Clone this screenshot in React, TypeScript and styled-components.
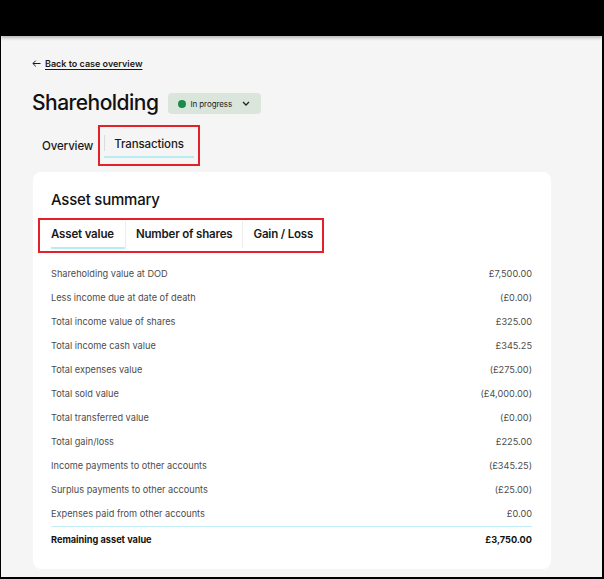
import styled, { createGlobalStyle } from 'styled-components'

const GlobalStyle = createGlobalStyle`
  html, body {
    margin: 0;
    padding: 0;
    background: #ffffff;
  }
  body {
    font-family: Inter, "Liberation Sans", Arial, sans-serif;
    color: #1a1a1a;
  }
  * {
    box-sizing: border-box;
  }
`

type SummaryRow = {
  label: string
  value: string
}

const rows: SummaryRow[] = [
  { label: 'Shareholding value at DOD', value: '£7,500.00' },
  { label: 'Less income due at date of death', value: '(£0.00)' },
  { label: 'Total income value of shares', value: '£325.00' },
  { label: 'Total income cash value', value: '£345.25' },
  { label: 'Total expenses value', value: '(£275.00)' },
  { label: 'Total sold value', value: '(£4,000.00)' },
  { label: 'Total transferred value', value: '(£0.00)' },
  { label: 'Total gain/loss', value: '£225.00' },
  { label: 'Income payments to other accounts', value: '(£345.25)' },
  { label: 'Surplus payments to other accounts', value: '(£25.00)' },
  { label: 'Expenses paid from other accounts', value: '£0.00' },
]

const assetTabs = ['Asset value', 'Number of shares', 'Gain / Loss']

export default function App() {
  return (
    <>
      <GlobalStyle />
      <Frame>
        <TopBar />
        <Main>
          <BackLink href="#">
            <svg width="9" height="7" viewBox="0 0 9 7" fill="none">
              <path d="M8.5 3.5H1M3.8 0.6L0.9 3.5l2.9 2.9" stroke="#1a1a1a" strokeWidth="1" />
            </svg>
            <span>Back to case overview</span>
          </BackLink>

          <TitleRow>
            <Title>Shareholding</Title>
            <StatusBadge>
              <Dot />
              <span>In progress</span>
              <svg width="8" height="5" viewBox="0 0 8 5" fill="none">
                <path d="M1 1l3 3 3-3" stroke="#222" strokeWidth="1.3" />
              </svg>
            </StatusBadge>
          </TitleRow>

          <PageTabs>
            <PageTab>Overview</PageTab>
            <Highlight $pad="4px 4px 6px 4px">
              <PageTab $active $divider>Transactions</PageTab>
            </Highlight>
          </PageTabs>

          <Card>
            <CardTitle>Asset summary</CardTitle>
            <SubTabsWrap>
              <Highlight $pad="1px 0 2px 11px">
                <SubTabs>
                  {assetTabs.map((t, i) => (
                    <SubTab
                      key={t}
                      $active={i === 0}
                      $first={i === 0}
                      $last={i === assetTabs.length - 1}
                    >
                      {t}
                    </SubTab>
                  ))}
                </SubTabs>
              </Highlight>
            </SubTabsWrap>

            <Rows>
              {rows.map((r) => (
                <Row key={r.label}>
                  <span>{r.label}</span>
                  <span>{r.value}</span>
                </Row>
              ))}
            </Rows>
            <TotalRow>
              <span>Remaining asset value</span>
              <span>£3,750.00</span>
            </TotalRow>
          </Card>
        </Main>
      </Frame>
    </>
  )
}

const Frame = styled.div`
  width: 604px;
  height: 579px;
  border: 1px solid #000;
  border-top: none;
  border-right-width: 2px;
  border-bottom-width: 2px;
  background: #f5f5f5;
  display: flex;
  flex-direction: column;
  overflow: hidden;
`

const TopBar = styled.div`
  height: 36px;
  flex-shrink: 0;
  background: #000;
  box-shadow: 0 2px 3px rgba(0, 0, 0, 0.25);
  position: relative;
  z-index: 1;
`

const Main = styled.main`
  flex: 1;
  padding: 21px 51px 0 31px;
  display: flex;
  flex-direction: column;
  align-items: flex-start;
`

const BackLink = styled.a`
  display: flex;
  align-items: center;
  gap: 4px;
  height: 12px;
  color: #1a1a1a;
  text-decoration: none;
  font-size: 9px;
  font-weight: 600;

  span {
    text-decoration: underline;
    text-underline-offset: 2px;
    text-decoration-thickness: 1px;
  }
`

const TitleRow = styled.div`
  display: flex;
  align-items: center;
  gap: 10px;
  margin-top: 21px;
  height: 26px;
`

const Title = styled.h1`
  margin: 0;
  font-size: 21px;
  font-weight: 500;
  letter-spacing: -0.025em;
  color: #111;
  line-height: 26px;
`

const StatusBadge = styled.button`
  display: flex;
  align-items: center;
  gap: 4px;
  height: 21px;
  width: 93px;
  padding: 0 0 0 10px;
  border: none;
  border-radius: 4px;
  background: #dae6dc;
  font-family: inherit;
  font-size: 8px;
  letter-spacing: -0.01em;
  color: #222;
  margin-top: 1px;

  svg {
    margin-left: 6px;
  }
`

const Dot = styled.span`
  width: 8px;
  height: 8px;
  border-radius: 50%;
  background: #1c8a4b;
`

const PageTabs = styled.div`
  display: flex;
  align-items: flex-end;
  margin-top: 9px;
`

const Highlight = styled.div<{ $pad: string }>`
  border: 2px solid #e3212b;
  padding: ${(p) => p.$pad};
  display: flex;
`

const PageTab = styled.div<{ $active?: boolean; $divider?: boolean }>`
  position: relative;
  font-size: 11.5px;
  font-weight: 500;
  letter-spacing: -0.01em;
  line-height: 16px;
  color: #1a1a1a;
  padding: ${(p) => (p.$active ? '5px 10px 4px' : '5px 5px 10px 10px')};
  border-bottom: 2px solid ${(p) => (p.$active ? '#b8ecf4' : 'transparent')};

  ${(p) =>
    p.$divider &&
    `
    &::before {
      content: '';
      position: absolute;
      left: 0;
      top: 4px;
      bottom: 5px;
      width: 1px;
      background: #dcdcdc;
    }
  `}
`

const Card = styled.section`
  margin-top: 6px;
  margin-left: 1px;
  width: 518px;
  background: #fff;
  border-radius: 8px;
  padding: 18px 19px 17px 18px;
`

const CardTitle = styled.h2`
  margin: 0;
  font-size: 15px;
  font-weight: 500;
  line-height: 20px;
  letter-spacing: -0.015em;
  color: #111;
`

const SubTabsWrap = styled.div`
  display: flex;
  margin: 8px 0 0 -13px;
`

const SubTabs = styled.div`
  display: flex;
`

const SubTab = styled.div<{ $active?: boolean; $first?: boolean; $last?: boolean }>`
  font-size: 11.5px;
  font-weight: 600;
  letter-spacing: -0.015em;
  line-height: 16px;
  color: #1a1a1a;
  padding: ${(p) => (p.$first ? '5px 11px 5px 0' : p.$last ? '5px 9px 5px 10px' : '5px 10px')};
  border-left: ${(p) => (p.$first ? 'none' : '1px solid #ececec')};
  border-bottom: 2px solid ${(p) => (p.$active ? '#b8ecf4' : 'transparent')};
`

const Rows = styled.div`
  margin-top: 9px;
  display: flex;
  flex-direction: column;
`

const Row = styled.div`
  display: flex;
  justify-content: space-between;
  height: 24px;
  line-height: 24px;
  font-size: 9.2px;
  color: #4d4d4d;
`

const TotalRow = styled(Row)`
  border-top: 1px solid #c4eef5;
  height: 26px;
  line-height: 26px;
  font-weight: 700;
  color: #111;
`
